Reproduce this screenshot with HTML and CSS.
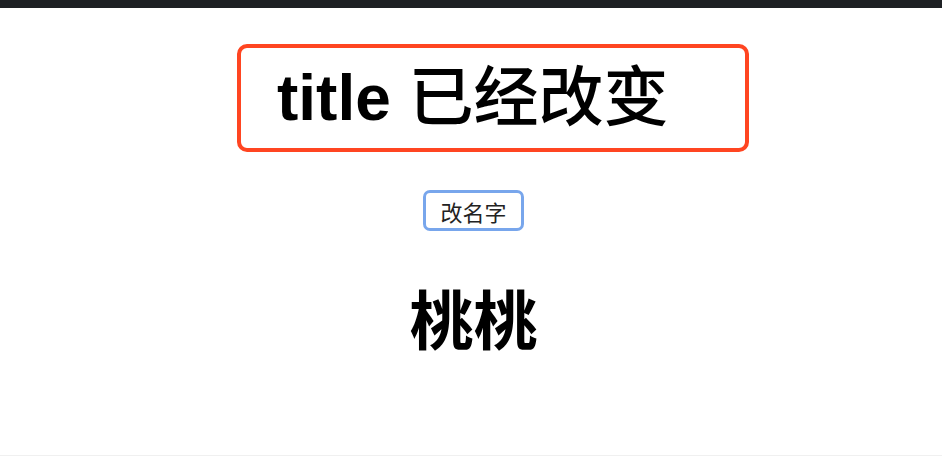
FILE: index.html
```html
<!DOCTYPE html>
<html lang="zh-CN">
<head>
<meta charset="utf-8">
<title>title 已经改变</title>
<link rel="stylesheet" href="styles.css">
</head>
<body>
<div class="topbar"></div>
<main class="page">
  <div class="title-box">
    <h1 class="title">title <span class="title-cn">已经改变</span></h1>
  </div>
  <button class="rename-btn" type="button">改名字</button>
  <h1 class="name">桃桃</h1>
</main>
<div class="bottom-line"></div>
</body>
</html>
```

FILE: styles.css
```css
html, body {
  margin: 0;
  padding: 0;
  background: #ffffff;
}

body {
  width: 942px;
  height: 456px;
  display: flex;
  flex-direction: column;
  font-family: "Liberation Sans", "Noto Sans CJK SC", sans-serif;
  color: #000;
  overflow: hidden;
}

.topbar {
  height: 8px;
  background: #1e2124;
  flex: none;
}

.page {
  flex: 1;
  display: flex;
  flex-direction: column;
  align-items: center;
  padding-left: 5px;
}

.title-box {
  align-self: flex-start;
  margin: 36px 0 0 232px;
  box-sizing: border-box;
  width: 512px;
  height: 108px;
  border: 4px solid #ff4521;
  border-radius: 10px;
  padding: 12px 0 0 36px;
}

.title {
  margin: 0;
  font-size: 64px;
  line-height: 64px;
  font-weight: 700;
  white-space: nowrap;
}

.title-cn {
  font-family: "Noto Sans CJK SC", sans-serif;
  font-weight: 500;
  font-size: 65px;
}

.rename-btn {
  margin-top: 38px;
  box-sizing: border-box;
  height: 41px;
  padding: 0 14px;
  background: #fff;
  border: 3px solid #78a6ec;
  border-radius: 7px;
  font-family: "Noto Sans CJK SC", sans-serif;
  font-size: 22px;
  line-height: 1;
  color: #222;
  cursor: pointer;
}

.name {
  margin: 53px 0 0;
  font-family: "Noto Sans CJK SC", sans-serif;
  font-size: 64px;
  line-height: 64px;
  font-weight: 700;
}

.bottom-line {
  height: 1px;
  background: #f0f0f0;
  flex: none;
}
```
